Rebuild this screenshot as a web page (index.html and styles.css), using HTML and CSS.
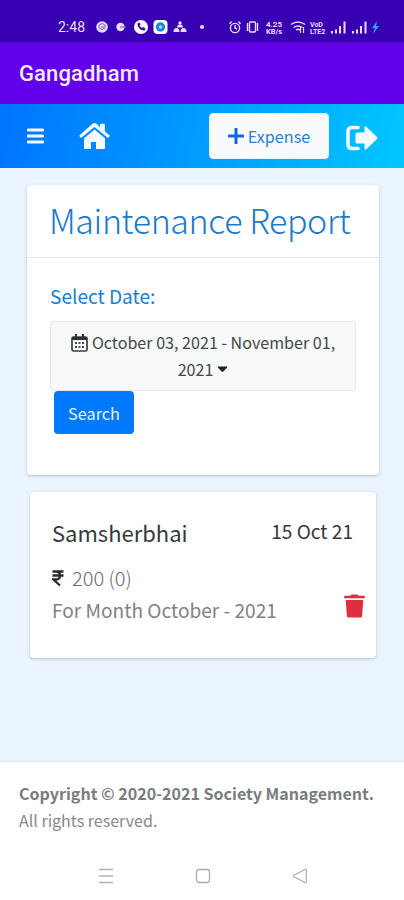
FILE: index.html
```
<!DOCTYPE html>
<html lang="en">
<head>
<meta charset="utf-8">
<meta name="viewport" content="width=device-width, initial-scale=1">
<title>Maintenance Report</title>
<link rel="stylesheet" href="styles.css">
</head>
<body>
<div class="status">
  <span class="clock">2:48</span>
  <svg class="status-icons" width="324" height="20" viewBox="80 0 324 20" fill="#eadcff">
    <circle cx="102" cy="10" r="5.8"/><path d="M99 8q3-3 6 0v3q-3 3-6 0zM101 10h3" fill="none" stroke="#8360c0" stroke-width="1"/>
    <circle cx="120.500" cy="10" r="4.200"/><path d="M120 10h6" stroke="#8360c0" stroke-width="1.200"/>
    <circle cx="141" cy="10" r="7" fill="#fff"/><path d="M137.500 6.500c0 4 3 7 7 7l1-2-2.500-1.500-1 1c-1-.5-2-1.500-2.500-2.500l1-1-1-2z" fill="#3b00b0"/>
    <rect x="153.500" y="3" width="14" height="14" rx="4" fill="#fff"/><circle cx="160.500" cy="10" r="4.700" fill="#1689df"/><circle cx="160.500" cy="10" r="1.800" fill="#a9dcff"/>
    <circle cx="180" cy="6" r="1.700"/><path d="M177 10.500q0-3 3-3t3 3zM173.500 15q0-4 3-4t3 4zM180.500 15q0-4 3-4t3 4z"/>
    <circle cx="202" cy="10" r="2"/>
    <g fill="none" stroke="#eadcff" stroke-width="1.400"><circle cx="235" cy="11" r="4.600"/><path d="M235 8v3l2 1M229.500 7l2-2.500M240.500 7l-2-2.500"/><rect x="249.500" y="5" width="6" height="10" rx="1"/><path d="M247.500 6v8M257.500 6v8"/></g>
    <text x="266" y="9.500" class="tiny" textLength="16" lengthAdjust="spacingAndGlyphs">4.25</text><text x="266" y="16.500" class="tiny" textLength="16" lengthAdjust="spacingAndGlyphs">KB/s</text>
    <g fill="none" stroke="#eadcff" stroke-width="1.500"><path d="M291 7.500q7-5 14 0M293.500 10.500q4.500-3 9 0M296 13q2-1.500 4 0"/></g><path d="M300.500 10v6M303.500 10v6" stroke="#eadcff" stroke-width="1.200"/>
    <text x="310" y="9.500" class="tiny">VoD</text><text x="310" y="16.500" class="tiny">LTE2</text>
    <path d="M331 14h2v2.500h-2zM335 12.500h2v4h-2zM339 9h2v7.500h-2zM343.500 4.500h2v12h-2zM352 14h2v2.500h-2zM356 12.500h2v4h-2zM360 9h2v7.500h-2zM364.500 4.500h2v12h-2z"/>
    <path d="M377 4l-5 7h3l-2 6 6-8h-3z" fill="#2ca6ff"/>
  </svg>
</div>
<header class="appbar">Gangadham</header>
<nav class="navbar">
  <svg class="menu-icon" width="17" height="16" viewBox="0 0 17 16"><path d="M1 2h15M1 8h15M1 14h15" stroke="#f4fbff" stroke-width="2.800" stroke-linecap="round"/></svg>
  <svg class="home-icon" width="31" height="27" viewBox="0 0 31 27" fill="#f4fbff"><path d="M15.500 6.500 5 15.300V25q0 1 1 1h6v-7h5v7h8q1 0 1-1v-9.700z"/><path d="M15.500 0q1 0 2 .8L21 4V1.500q0-.8.800-.8H25q.8 0 .8.800v6.700l4.600 4q.6.600 0 1.200l-1 1q-.5.500-1.100 0L15.500 3.900 2.700 14.400q-.6.500-1.100 0l-1-1q-.6-.6 0-1.200L13.500.8q1-.8 2-.8z"/></svg>
  <button class="expense"><svg width="16" height="16" viewBox="0 0 16 16"><path d="M8 1v14M1 8h14" stroke="#1263d8" stroke-width="3" stroke-linecap="round"/></svg><span>Expense</span></button>
  <svg class="exit-icon" width="32" height="26" viewBox="0 0 32 26"><path d="M12 2.500H6q-4 0-4 4v13q0 4 4 4h6" fill="none" stroke="#f4fbff" stroke-width="3.600" stroke-linecap="round"/><path d="M20 1.500 31 12q.8 1 0 2L20 24.500q-1.500 1-1.500-.7V18.500h-7.500q-1.500 0-1.500-1.500V9q0-1.500 1.500-1.500h7.500V2.200q0-1.700 1.500-.7z" fill="#f4fbff"/></svg>
</nav>
<main>
  <section class="card report">
    <h1><span class="title">Maintenance Report</span></h1>
    <div class="report-body">
      <label class="select-label">Select Date:</label>
      <div class="range">
        <div class="range-line"><svg width="17" height="19" viewBox="0 0 17 19"><rect x="1" y="4" width="15" height="14" rx="1.500" fill="none" stroke="#3a3d40" stroke-width="1.700"/><path d="M1 4h15v3H1zM4 1h2v4H4zM11 1h2v4h-2z" fill="#2d3033"/><path d="M4 10h2m1.500 0h2M11 10h2M4 14h2m1.500 0h2M11 14h2" stroke="#4b4e51" stroke-width="2"/></svg><span>October 03, 2021 - November 01,</span></div>
        <div class="range-line"><span>2021</span><svg width="11" height="7" viewBox="0 0 11 7"><path d="M1 .5h9q.8.500 0 1.200L6.300 5.600q-.8.800-1.600 0L1 1.700Q.2 1 1 .5z" fill="#222529"/></svg></div>
      </div>
      <button class="search">Search</button>
    </div>
  </section>
  <section class="card entry">
    <div class="entry-head"><span class="name">Samsherbhai</span><span class="date">15 Oct 21</span></div>
    <div class="amount"><svg width="12" height="17" viewBox="0 0 12 17"><path d="M.5 1.500h11M.5 5.500h11M1 1.500h3q4 0 4 4t-4 4H1.500l6.500 6" fill="none" stroke="#292c2f" stroke-width="2.300"/></svg><span>200 (0)</span></div>
    <div class="month-row"><span class="month">For Month October - 2021</span>
      <svg class="trash" width="21" height="24" viewBox="0 0 21 24" fill="#dc2f42"><path d="M1 1.800h5.500L7.500.5h6l1 1.300H20q.8 0 .8.700v1.700H.2V2.500q0-.7.800-.7z"/><path d="M1.700 6h17.600l-1.200 16q-.1 1.500-1.600 1.500h-12Q3 23.500 2.900 22z"/></svg>
    </div>
  </section>
</main>
<footer><strong>Copyright © 2020-2021 Society Management.</strong><span>All rights reserved.</span></footer>
<div class="softkeys">
  <svg width="16" height="16" viewBox="0 0 16 16"><path d="M1 1.500h14M1 8h14M1 14.500h14" stroke="#b2b2b2" stroke-width="1.300"/></svg>
  <svg width="16" height="16" viewBox="0 0 16 16"><rect x="1.500" y="1.500" width="13" height="13" rx="2.500" fill="none" stroke="#aaa" stroke-width="1.300"/></svg>
  <svg width="16" height="16" viewBox="0 0 16 16"><path d="M13 1.500 2 7.200q-1 .8 0 1.600l11 5.700q1.300.3 1.300-1V2.500q0-1.300-1.300-1z" fill="none" stroke="#b0b0b0" stroke-width="1.300"/></svg>
</div>
</body>
</html>
```

FILE: styles.css
```
* { box-sizing: border-box; }
body { margin: 0; width: 404px; height: 900px; overflow: hidden; display: flex; flex-direction: column; background: #fff; font-family: "Noto Sans CJK SC", sans-serif; white-space: nowrap; }
svg { display: block; flex: none; }
button { font: inherit; margin: 0; padding: 0; }
.status { height: 42px; background: #3800b2; padding: 17px 0 5px 58px; display: flex; align-items: center; flex: none; }
.clock { width: 22px; flex: none; font: 14px/20px Roboto, sans-serif; color: #eadfff; }
.tiny { font: bold 7px Roboto, sans-serif; }
.appbar { height: 62px; flex: none; background: #6100e8; color: #f3eaff; font: 500 22px/63px Roboto, sans-serif; letter-spacing: .1px; padding-left: 19px; }
.navbar { height: 64px; flex: none; background: linear-gradient(100deg, #0074ff, #00c6ff); display: flex; align-items: center; padding-left: 27px; }
.home-icon { margin-left: 35px; }
.expense { width: 120px; height: 46px; margin: 0 0 1px 99px; border: 1px solid #e8f4fd; border-radius: 4px; background: #f8fafc; color: #2c7fd0; display: flex; align-items: center; justify-content: center; gap: 4px; font-size: 16.2px; }
.exit-icon { margin: 4px 0 0 17px; }
main { height: 593px; flex: none; background: #e9f4fe; padding: 17px 25px 0 27px; display: flex; flex-direction: column; gap: 17px; }
.card { background: #fff; border-radius: 4px; box-shadow: 0 1px 3px rgba(60, 75, 100, .3); }
.report { height: 290px; }
h1 { margin: 0; height: 73px; border-bottom: 1px solid #e4e6e8; padding-left: 22px; font-weight: 200; font-size: 34px; letter-spacing: -.4px; line-height: 70px; color: #1b7acb; }
.report-body { padding: 24px 23px 0; display: flex; flex-direction: column; align-items: flex-start; }
.select-label { font-size: 19.1px; line-height: 29px; color: #1b7ed2; }
.range { margin-top: 10px; width: 306px; height: 70px; border: 1px solid #e4e6e8; border-radius: 4px; background: #f8f9fa; color: #45484b; font-size: 16.1px; line-height: 27px; padding-top: 7px; }
.range-line { height: 27px; display: flex; align-items: center; justify-content: center; gap: 4px; }
.search { margin-left: 4px; width: 80px; height: 43px; border: 0; border-radius: 4px; background: #0079fd; color: #e8f4ff; font-size: 16.3px; }
.entry { height: 166px; margin: 0 3px; padding: 25px 23px 0 22px; }
.entry-head { display: flex; justify-content: space-between; height: 45px; color: #36393c; }
.name { font-size: 22px; line-height: 30px; }
.date { font-size: 19.1px; line-height: 28px; }
.amount { display: flex; align-items: center; gap: 8px; height: 32px; font-weight: 300; font-size: 20px; line-height: 32px; color: #686b6e; }
.month-row { display: flex; justify-content: space-between; height: 32px; font-size: 19.1px; line-height: 33px; color: #808386; }
.trash { margin: 0 -12px 0 0; }
footer { height: 90px; flex: none; border-top: 1px solid #e1e9ed; padding: 18px 19px 0; display: flex; flex-direction: column; align-items: flex-start; color: #84898d; font-size: 16.05px; line-height: 27px; }
footer strong { font-weight: 700; color: #777d81; }
.softkeys { flex: none; height: 49px; padding-left: 98px; display: flex; align-items: center; gap: 81px; }
```
